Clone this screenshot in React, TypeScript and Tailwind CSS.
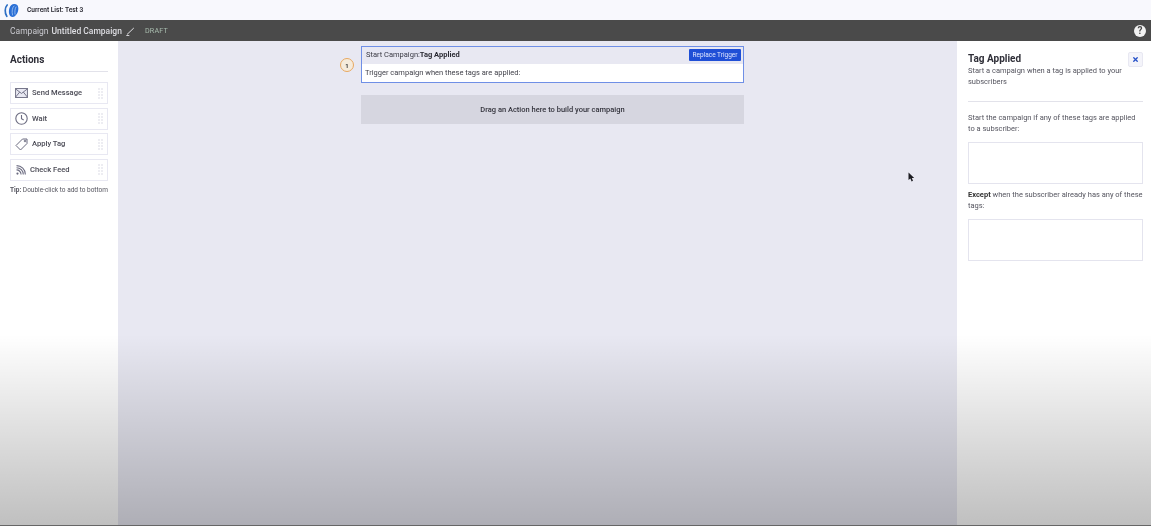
import { X } from "lucide-react";

function GripDots() {
  return (
    <div className="ml-auto grid grid-cols-2 gap-[1px] opacity-40">
      {[0, 1, 2, 3, 4, 5, 6, 7].map((i) => (
        <span key={i} className="h-[2px] w-[2px] bg-[#d4d4e0]" />
      ))}
    </div>
  );
}

function MailIcon() {
  return (
    <svg width="13" height="10" viewBox="0 0 14 11" fill="none" stroke="#6b6b80" strokeWidth="1">
      <rect x="0.5" y="0.5" width="13" height="10" fill="#e8e8f2" />
      <path d="M0.5 1L7 6l6.5-5M0.5 10l4.5-5.5M13.5 10L9 4.5" />
    </svg>
  );
}

function ClockIcon() {
  return (
    <svg width="13" height="13" viewBox="0 0 13 13" fill="none" stroke="#6b6b80" strokeWidth="1.1">
      <circle cx="6.5" cy="6.5" r="5.7" />
      <path d="M6.5 3v3.7l2.2 1.3" />
    </svg>
  );
}

function TagIcon() {
  return (
    <svg width="13" height="13" viewBox="0 0 13 13" fill="none" stroke="#6b6b80" strokeWidth="1">
      <path d="M7.5 1H12v4.5L5.5 12 1 7.5z" />
      <circle cx="10" cy="3" r="0.8" />
    </svg>
  );
}

function FeedIcon() {
  return (
    <svg width="10" height="10" viewBox="0 0 11 11" fill="none" stroke="#6b6b80" strokeWidth="1.2">
      <circle cx="1.6" cy="9.4" r="1.2" fill="#6b6b80" stroke="none" />
      <path d="M0.6 5.4a5 5 0 0 1 5 5M0.6 3a7.4 7.4 0 0 1 7.4 7.4M0.6 0.7a9.7 9.7 0 0 1 9.7 9.7" />
    </svg>
  );
}

function ActionRow({ icon, label, iconBox }: { icon: React.ReactNode; label: string; iconBox: string }) {
  return (
    <div className="flex h-[22px] items-center border border-[#e8e8f2] bg-white pl-[3px] pr-[4px]">
      <div className={`flex justify-center ${iconBox}`}>{icon}</div>
      <span className="pb-[0.5px] text-[7.6px] font-medium leading-none text-[#4a4a55]">{label}</span>
      <GripDots />
    </div>
  );
}

function TagBox() {
  return <div className="h-[42px] border border-[#e4e4ee] bg-white" />;
}

export default function App() {
  return (
    <div className="relative flex h-[526px] w-[1151px] flex-col overflow-hidden bg-white font-['Roboto',sans-serif] blur-[0.45px]">
      <header className="flex h-[20px] shrink-0 items-center bg-[#f8f8fd] pl-[4px]">
        <svg width="16" height="15" viewBox="0 0 16 14" fill="none" strokeLinecap="round">
          <path d="M3.2 1.5C0.8 4 0.5 9.5 2.8 12.8" stroke="#2d6fc4" strokeWidth="1.7" />
          <path d="M10 0.4C6 0.6 4.2 6 5.2 10.5C5.8 13.2 8.6 14.2 10.8 12.8C14.4 10 15.4 4 13.2 1.5C12.4 0.7 11.2 0.3 10 0.4Z" fill="#2a6fd6" />
          <path d="M10 2.5C8.2 4 7.6 8 8.5 11.5M12 3.5C11 5 10.6 8 11 10.6" stroke="#a9c8f0" strokeWidth="0.8" />
        </svg>
        <span className="ml-[7px] pt-[1px] text-[6.6px] font-semibold text-[#2a2a33]">Current List: Test 3</span>
      </header>

      <div className="flex h-[21px] shrink-0 items-center bg-[#4a4a4a] pl-[10px] pr-[5px] pt-[1px] text-[8.5px] text-[#c9c9cf]">
        <span>Campaign</span>
        <span className="ml-[3px] font-medium text-[#dedee3]">Untitled Campaign</span>
        <svg className="ml-[4px]" width="9" height="9" viewBox="0 0 9 9" fill="none" stroke="#e2e2e6" strokeWidth="1">
          <path d="M1 7.5L7.8 1M0.3 8.6h3" />
        </svg>
        <span className="ml-[10px] text-[7.2px] tracking-[0.2px] text-[#a8bcae]">DRAFT</span>
        <div className="ml-auto flex h-[12px] w-[12px] items-center justify-center rounded-full bg-[#f2f2f2] text-[10px] font-bold leading-none text-[#4a4a4a]">
          ?
        </div>
      </div>

      <div className="flex min-h-0 flex-1">
        <aside className="w-[118px] shrink-0 bg-white px-[10px] pt-[12px]">
          <h2 className="text-[10px] font-bold leading-[13px] text-[#2f2f38]">Actions</h2>
          <div className="mb-[10px] mt-[5px] h-px bg-[#e2e2ea]" />
          <div className="flex flex-col gap-[3.67px]">
            <ActionRow icon={<MailIcon />} label="Send Message" iconBox="w-[14px] mr-[4px]" />
            <ActionRow icon={<ClockIcon />} label="Wait" iconBox="w-[14px] mr-[4px]" />
            <ActionRow icon={<TagIcon />} label="Apply Tag" iconBox="w-[14px] mr-[4px]" />
            <ActionRow icon={<FeedIcon />} label="Check Feed" iconBox="w-[13px] mr-[3px]" />
          </div>
          <p className="mt-[5px] text-[6.5px] leading-[9px] text-[#55555f]">
            <b>Tip:</b> Double-click to add to bottom
          </p>
        </aside>

        <main className="flex min-w-0 flex-1 justify-center bg-[#e8e8f2] pl-[30px] pt-[5px]">
          <div className="relative w-[383px]">
            <div className="absolute left-[-21px] top-[12px] flex h-[14px] w-[14px] items-center justify-center rounded-full border border-[#e8a860] bg-[#f5ebdc] text-[6px] font-bold text-[#3a3a3a]">
              1
            </div>
            <div className="border border-[#6f8fe6]">
              <div className="flex h-[17px] items-center justify-between bg-[#e8e8f2] pb-[1px] pl-[4px] pr-[2px] text-[7.5px] text-[#3a3a44]">
                <span>
                  Start Campaign:<b className="text-[#2a2a33]">Tag Applied</b>
                </span>
                <button className="h-[12px] w-[52px] rounded-[1px] bg-[#1f4fd6] text-[6.5px] leading-none text-[#dfe6ff]">
                  Replace Trigger
                </button>
              </div>
              <div className="flex h-[18px] items-center bg-white pl-[3px] text-[7.5px] text-[#3f3f48]">
                Trigger campaign when these tags are applied:
              </div>
            </div>
            <div className="mt-[12px] flex h-[29px] items-center justify-center bg-[#d6d6e0] text-[7.5px] font-medium text-[#33333c]">
              Drag an Action here to build your campaign
            </div>
          </div>
        </main>

        <aside className="w-[194px] shrink-0 bg-white pl-[11px] pr-[8px] pt-[12px]">
          <div className="flex items-start justify-between">
            <div className="w-[155px]">
              <h2 className="text-[10px] font-bold leading-[11px] text-[#2f2f38]">Tag Applied</h2>
              <p className="mt-[1px] text-[7.5px] leading-[11px] text-[#55555f]">
                Start a campaign when a tag is applied to your subscribers
              </p>
            </div>
            <div className="-mt-[1px] flex h-[15px] w-[15px] items-center justify-center rounded-[2px] border border-[#e8e8f2] bg-[#f4f4fa]">
              <X size={7} strokeWidth={4.5} className="text-[#2450c8]" />
            </div>
          </div>
          <div className="mt-[14px] h-px bg-[#e2e2ea]" />
          <p className="mt-[10px] text-[7.5px] leading-[11px] text-[#55555f]">
            Start the campaign if any of these tags are applied to a subscriber:
          </p>
          <div className="mt-[8px]">
            <TagBox />
          </div>
          <p className="mt-[5px] text-[7.5px] leading-[11px] text-[#55555f]">
            <b className="text-[#333]">Except</b> when the subscriber already has any of these tags:
          </p>
          <div className="mt-[8px]">
            <TagBox />
          </div>
        </aside>
      </div>

      {/* video fade at the bottom of the frame */}
      <div className="pointer-events-none absolute inset-x-0 bottom-0 h-[192px] bg-gradient-to-b from-transparent to-black/25" />
      <div className="pointer-events-none absolute inset-x-0 bottom-0 h-px bg-[#666]" />
      <svg className="pointer-events-none absolute left-[908px] top-[172px]" width="7" height="10" viewBox="0 0 7 10">
        <path d="M0.5 0.5V8L2.4 6.4 3.6 9.4 5 8.8 3.8 6H6.2Z" fill="#1c1c22" />
      </svg>
    </div>
  );
}
